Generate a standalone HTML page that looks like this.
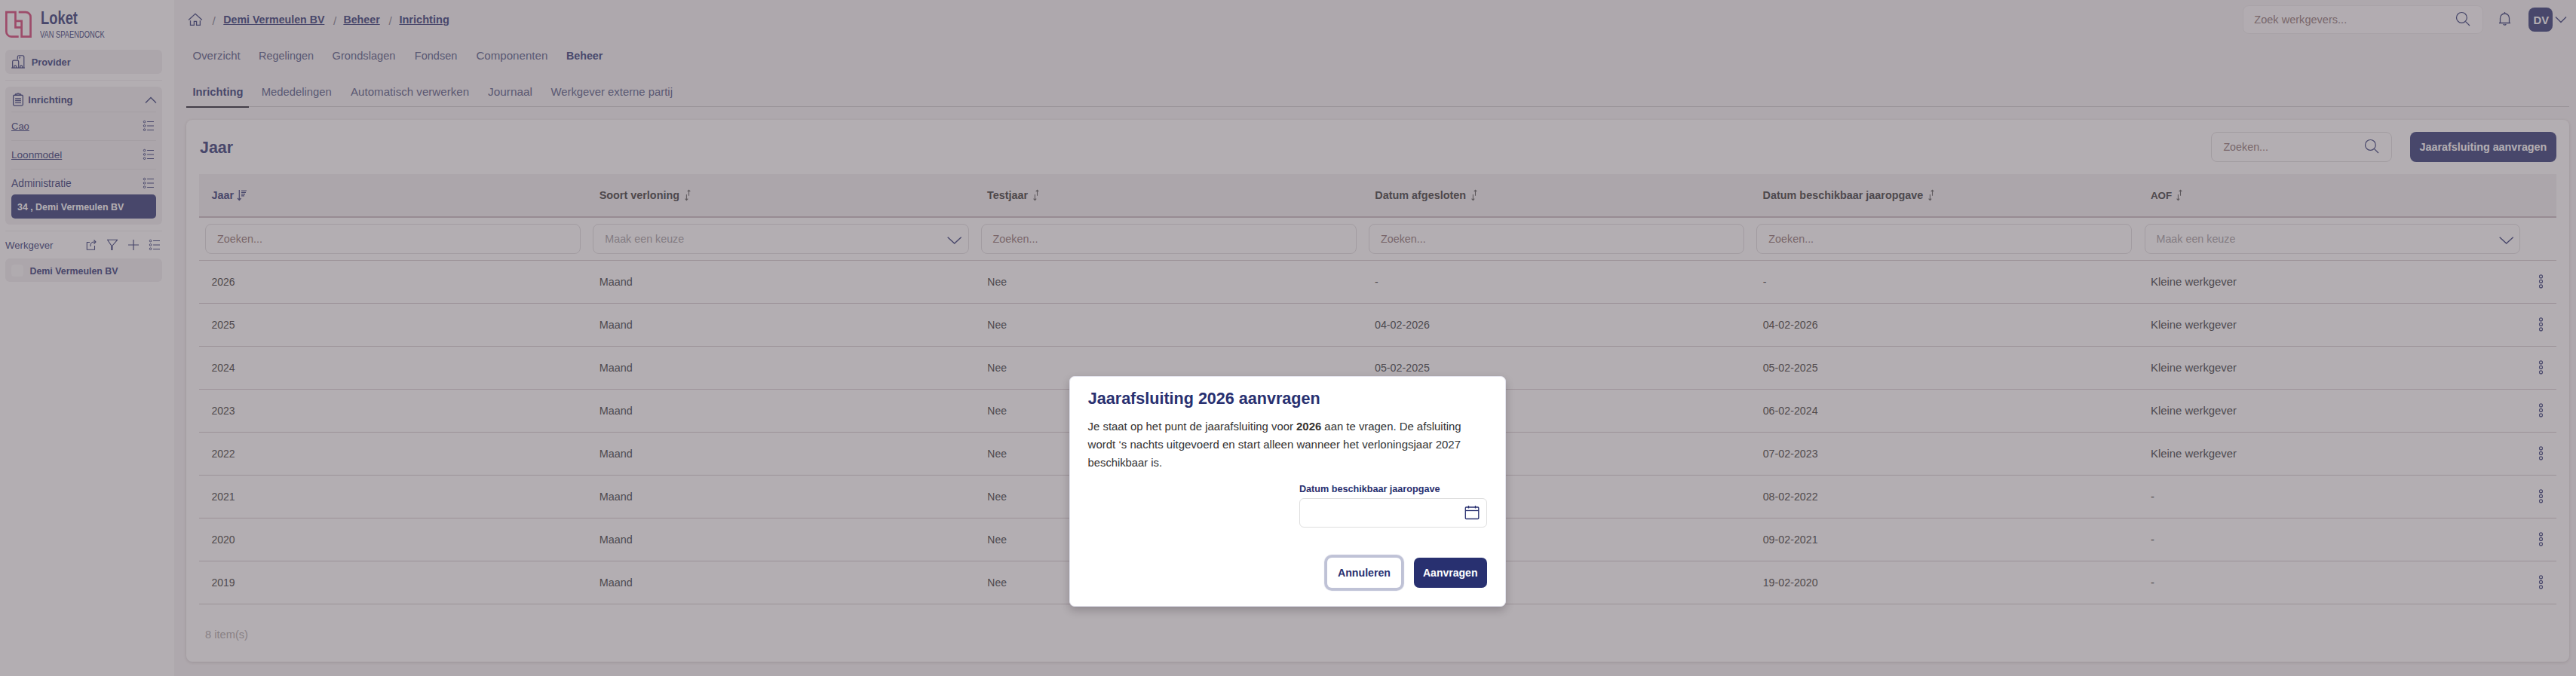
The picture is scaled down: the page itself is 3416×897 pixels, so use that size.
<!DOCTYPE html>
<html><head><meta charset="utf-8"><style>
html,body{margin:0;padding:0;}
body{width:3416px;height:897px;position:relative;overflow:hidden;font-family:"Liberation Sans", sans-serif;background:#f5f3f4;}
.t{position:absolute;white-space:nowrap;line-height:1;}
svg{overflow:visible;}
</style></head><body>
<div style="position:absolute;left:0.0px;top:0.0px;width:231.0px;height:897.0px;background:#ffffff;"></div>
<div style="position:absolute;left:231.0px;top:0.0px;width:3185.0px;height:897.0px;background:#f5f3f4;"></div>
<svg style="position:absolute;left:6.0px;top:13.0px;" width="38" height="39" viewBox="0 0 38 39" fill="none"><g stroke="#d23a6e" stroke-width="2.7" fill="none" stroke-linejoin="miter"><path d="M18.7 35.55 H9 A6.6 6.6 0 0 1 2.35 29 V3.05 H14.45 V23.35 H22.65"/><path d="M18.7 3.05 H28 A6.6 6.6 0 0 1 34.55 9.6 V35.55 H22.65 V14.85 H14.45"/></g></svg>
<div class="t" style="left:53.7px;top:12px;font-size:24.4px;font-weight:bold;color:#283070;transform:scaleX(0.753);transform-origin:0 0;">Loket</div>
<div class="t" style="left:53.2px;top:40px;font-size:12.4px;font-weight:normal;color:#283070;transform:scaleX(0.752);transform-origin:0 0;">VAN SPAENDONCK</div>
<div style="position:absolute;left:7.0px;top:66.0px;width:208.0px;height:32.0px;background:#f0eef0;border-radius:6px;"></div>
<svg style="position:absolute;left:15.0px;top:72.0px;" width="19" height="20" viewBox="0 0 19 20" fill="none"><g stroke="#283070" stroke-width="1.2" fill="none"><path d="M8.3 7 V3.5 A1.75 1.75 0 0 1 10.05 1.75 H15.05 A1.75 1.75 0 0 1 16.8 3.5 V18.05"/><path d="M1.65 18.05 V9.8 A1.75 1.75 0 0 1 3.4 8.05 H7.95 A1.75 1.75 0 0 1 9.7 9.8 V18.05"/><path d="M0.2 18.05 H17.9"/><path d="M3.7 18.05 V16.3 A1.45 1.45 0 0 1 6.6 16.3 V18.05"/><path d="M11.7 18.05 V16.3 A1.45 1.45 0 0 1 14.6 16.3 V18.05"/><path d="M10.3 3.9 H12.2 M10.3 5.1 H11.3"/></g></svg>
<div class="t" style="left:41.7px;top:77px;font-size:12.8px;font-weight:bold;color:#283070;">Provider</div>
<div style="position:absolute;left:7.0px;top:106.0px;width:208.0px;height:1.0px;background:#eeecee;"></div>
<div style="position:absolute;left:7.0px;top:115.0px;width:208.0px;height:183.0px;background:#f0eef0;border-radius:6px;"></div>
<svg style="position:absolute;left:16.0px;top:122.0px;" width="16" height="20" viewBox="0 0 16 20" fill="none"><g stroke="#283070" stroke-width="1.3" fill="none"><rect x="1.65" y="4.25" width="12.7" height="13.8" rx="1.5"/><path d="M4.6 4.25 V2.9 H6.3 A1.9 1.9 0 0 1 9.6 2.9 H11.3 V4.25"/><path d="M4.1 8.8 H11.9 M4.1 11.5 H11.9 M4.1 14.4 H11.9"/></g></svg>
<div class="t" style="left:37.3px;top:126px;font-size:13px;font-weight:bold;color:#283070;">Inrichting</div>
<svg style="position:absolute;left:192.0px;top:128.0px;" width="16" height="9" viewBox="0 0 16 9" fill="none"><path d="M1 8.5 L8 1.5 L15 8.5" stroke="#283070" stroke-width="1.3" fill="none"/></svg>
<div style="position:absolute;left:15.0px;top:148.0px;width:192.0px;height:1.0px;background:#e2e0e2;"></div>
<div style="position:absolute;left:15.0px;top:186.0px;width:192.0px;height:1.0px;background:#e2e0e2;"></div>
<div style="position:absolute;left:15.0px;top:224.0px;width:192.0px;height:1.0px;background:#e2e0e2;"></div>
<div class="t" style="left:15.0px;top:161px;font-size:13px;font-weight:normal;color:#283070;text-decoration:underline;">Cao</div>
<svg style="position:absolute;left:190.0px;top:159.0px;" width="15" height="15" viewBox="0 0 15 15" fill="none"><g stroke="#283070" stroke-width="1" fill="none"><circle cx="1.6" cy="2.6" r="1.3"/><circle cx="1.6" cy="7.9" r="1.3"/><circle cx="1.6" cy="13.2" r="1.3"/><path d="M5.1 2.5 H14 M5.1 8 H14 M5.1 13.5 H14"/></g></svg>
<div class="t" style="left:15.0px;top:199px;font-size:13.6px;font-weight:normal;color:#283070;text-decoration:underline;">Loonmodel</div>
<svg style="position:absolute;left:190.0px;top:197.0px;" width="15" height="15" viewBox="0 0 15 15" fill="none"><g stroke="#283070" stroke-width="1" fill="none"><circle cx="1.6" cy="2.6" r="1.3"/><circle cx="1.6" cy="7.9" r="1.3"/><circle cx="1.6" cy="13.2" r="1.3"/><path d="M5.1 2.5 H14 M5.1 8 H14 M5.1 13.5 H14"/></g></svg>
<div class="t" style="left:15.0px;top:237px;font-size:13.8px;font-weight:normal;color:#283070;">Administratie</div>
<svg style="position:absolute;left:190.0px;top:235.0px;" width="15" height="15" viewBox="0 0 15 15" fill="none"><g stroke="#283070" stroke-width="1" fill="none"><circle cx="1.6" cy="2.6" r="1.3"/><circle cx="1.6" cy="7.9" r="1.3"/><circle cx="1.6" cy="13.2" r="1.3"/><path d="M5.1 2.5 H14 M5.1 8 H14 M5.1 13.5 H14"/></g></svg>
<div style="position:absolute;left:15.0px;top:258.0px;width:192.0px;height:32.0px;background:#283070;border-radius:5px;"></div>
<div class="t" style="left:23.0px;top:269px;font-size:12.4px;font-weight:bold;color:#ffffff;">34 , Demi Vermeulen BV</div>
<div style="position:absolute;left:7.0px;top:306.0px;width:208.0px;height:1.0px;background:#eeecee;"></div>
<div class="t" style="left:7.0px;top:319px;font-size:13.2px;font-weight:normal;color:#283070;">Werkgever</div>
<svg style="position:absolute;left:114.0px;top:317.0px;" width="14" height="15" viewBox="0 0 14 15" fill="none"><g stroke="#283070" stroke-width="1.1" fill="none" stroke-linejoin="round"><path d="M5 4.5 H1.3 V14.2 H11.5 V9"/><path d="M6 10 V8.5 C6 6 8 4 11 4 H12.5"/><path d="M10.5 1.5 L13 4 L10.5 6.5"/></g></svg>
<svg style="position:absolute;left:142.0px;top:317.0px;" width="15" height="15" viewBox="0 0 15 15" fill="none"><path d="M0.5 1.3 H13.6 L7 9 V14.5 L5.8 14.5 V9 Z" stroke="#283070" stroke-width="1.1" fill="none" stroke-linejoin="round"/></svg>
<svg style="position:absolute;left:170.0px;top:318.0px;" width="14" height="14" viewBox="0 0 14 14" fill="none"><path d="M7 0 V14 M0 7 H14" stroke="#283070" stroke-width="1.2"/></svg>
<svg style="position:absolute;left:198.0px;top:317.0px;" width="15" height="15" viewBox="0 0 15 15" fill="none"><g stroke="#283070" stroke-width="1" fill="none"><circle cx="1.6" cy="2.6" r="1.3"/><circle cx="1.6" cy="7.9" r="1.3"/><circle cx="1.6" cy="13.2" r="1.3"/><path d="M5.1 2.5 H14 M5.1 8 H14 M5.1 13.5 H14"/></g></svg>
<div style="position:absolute;left:7.0px;top:343.0px;width:208.0px;height:31.0px;background:#f0eef0;border-radius:6px;"></div>
<div style="position:absolute;left:15.0px;top:351.0px;width:16.0px;height:16.0px;background:#f8f8f8;border-radius:4px;"></div>
<div class="t" style="left:39.5px;top:354px;font-size:12.4px;font-weight:bold;color:#283070;">Demi Vermeulen BV</div>
<svg style="position:absolute;left:249.0px;top:17.0px;" width="20" height="18" viewBox="0 0 20 18" fill="none"><g stroke="#283070" stroke-width="1.3" fill="none" stroke-linejoin="miter"><path d="M1.1 9.6 L10 1.3 L18.9 9.6"/><path d="M3.5 10.3 V16.4 H8.4 V11.3 H11.6 V16.4 H16.4 V10.3"/></g></svg>
<div class="t" style="left:281.4px;top:20px;font-size:15.5px;font-weight:normal;color:#7a7a8a;">/</div>
<div class="t" style="left:296.3px;top:19px;font-size:14.2px;font-weight:bold;color:#283070;text-decoration:underline;">Demi Vermeulen BV</div>
<div class="t" style="left:442.0px;top:20px;font-size:15.5px;font-weight:normal;color:#7a7a8a;">/</div>
<div class="t" style="left:455.4px;top:19px;font-size:14.25px;font-weight:bold;color:#283070;text-decoration:underline;">Beheer</div>
<div class="t" style="left:515.5px;top:20px;font-size:15.5px;font-weight:normal;color:#7a7a8a;">/</div>
<div class="t" style="left:529.4px;top:19px;font-size:14.6px;font-weight:bold;color:#283070;text-decoration:underline;">Inrichting</div>
<div class="t" style="left:255.5px;top:67px;font-size:14.96px;font-weight:normal;color:#4c5280;">Overzicht</div>
<div class="t" style="left:343.0px;top:67px;font-size:14.43px;font-weight:normal;color:#4c5280;">Regelingen</div>
<div class="t" style="left:440.6px;top:67px;font-size:14.67px;font-weight:normal;color:#4c5280;">Grondslagen</div>
<div class="t" style="left:549.8px;top:67px;font-size:14.52px;font-weight:normal;color:#4c5280;">Fondsen</div>
<div class="t" style="left:631.4px;top:66px;font-size:15.12px;font-weight:normal;color:#4c5280;">Componenten</div>
<div class="t" style="left:751.0px;top:67px;font-size:14.25px;font-weight:bold;color:#283070;">Beheer</div>
<div class="t" style="left:255.5px;top:115px;font-size:14.7px;font-weight:bold;color:#283070;">Inrichting</div>
<div class="t" style="left:346.8px;top:115px;font-size:14.8px;font-weight:normal;color:#4c5280;">Mededelingen</div>
<div class="t" style="left:465.0px;top:114px;font-size:15.11px;font-weight:normal;color:#4c5280;">Automatisch verwerken</div>
<div class="t" style="left:647.0px;top:114px;font-size:15.38px;font-weight:normal;color:#4c5280;">Journaal</div>
<div class="t" style="left:730.5px;top:115px;font-size:14.85px;font-weight:normal;color:#4c5280;">Werkgever externe partij</div>
<div style="position:absolute;left:247.0px;top:141.0px;width:3160.0px;height:1.0px;background:#c9c6c9;"></div>
<div style="position:absolute;left:247.0px;top:140.5px;width:83.0px;height:2.0px;background:#1f1f2a;"></div>
<div style="position:absolute;left:2974.0px;top:6.7px;width:318.5px;height:38.5px;background:#fcfbfc;border:1px solid #ebe9eb;border-radius:8px;box-sizing:border-box;"></div>
<div class="t" style="left:2989.3px;top:19px;font-size:14.56px;font-weight:normal;color:#8a6f6f;">Zoek werkgevers...</div>
<svg style="position:absolute;left:3257.0px;top:16.0px;" width="19" height="19" viewBox="0 0 19 19" fill="none"><g stroke="#283070" stroke-width="1.2" fill="none"><circle cx="7.4" cy="7.4" r="6.9"/><path d="M12.6 12.6 L18 18"/></g></svg>
<svg style="position:absolute;left:3313.0px;top:15.0px;" width="17" height="20" viewBox="0 0 17 20" fill="none"><g stroke="#283070" stroke-width="1.3" fill="none"><path d="M8.5 1 V2.5"/><path d="M2.5 15.5 V9 A6 6 0 0 1 14.5 9 V15.5 H1 H16"/><path d="M6.8 17 A1.8 1.8 0 0 0 10.2 17"/></g></svg>
<div style="position:absolute;left:3353.0px;top:10.0px;width:32.0px;height:32.0px;background:#283070;border-radius:8px;"></div>
<div class="t" style="left:3359.6px;top:20px;font-size:14.8px;font-weight:bold;color:#ffffff;">DV</div>
<svg style="position:absolute;left:3388.0px;top:21.0px;" width="16" height="10" viewBox="0 0 16 10" fill="none"><path d="M1 1.5 L8 8.5 L15 1.5" stroke="#283070" stroke-width="1.3" fill="none"/></svg>
<div style="position:absolute;left:247.0px;top:158.7px;width:3160.0px;height:719.7px;background:#ffffff;border-radius:8px;box-shadow:0 1px 4px rgba(40,20,30,0.2);"></div>
<div class="t" style="left:265.0px;top:186px;font-size:21.4px;font-weight:bold;color:#283070;">Jaar</div>
<div style="position:absolute;left:2932.0px;top:175.0px;width:239.5px;height:39.6px;background:#fff;border:1px solid #dcdadc;border-radius:8px;box-sizing:border-box;"></div>
<div class="t" style="left:2948.4px;top:188px;font-size:14.3px;font-weight:normal;color:#8a6f6f;">Zoeken...</div>
<svg style="position:absolute;left:3136.0px;top:185.0px;" width="19" height="19" viewBox="0 0 19 19" fill="none"><g stroke="#283070" stroke-width="1.2" fill="none"><circle cx="7.4" cy="7.4" r="6.9"/><path d="M12.6 12.6 L18 18"/></g></svg>
<div style="position:absolute;left:3196.0px;top:175.0px;width:194.0px;height:40.0px;background:#283070;border-radius:8px;"></div>
<div class="t" style="left:3208.5px;top:188px;font-size:14.34px;font-weight:bold;color:#ffffff;">Jaarafsluiting aanvragen</div>
<div style="position:absolute;left:264.0px;top:231.0px;width:3126.0px;height:56.0px;background:#f0eef0;"></div>
<div style="position:absolute;left:264.0px;top:287.0px;width:3126.0px;height:2.0px;background:#c6b9c0;"></div>
<div class="t" style="left:280.4px;top:252px;font-size:14.4px;font-weight:bold;color:#283070;">Jaar</div>
<div class="t" style="left:794.7px;top:252px;font-size:14.4px;font-weight:bold;color:#333333;">Soort verloning</div>
<div class="t" style="left:1309.0px;top:252px;font-size:14.4px;font-weight:bold;color:#333333;">Testjaar</div>
<div class="t" style="left:1823.3px;top:252px;font-size:14.4px;font-weight:bold;color:#333333;">Datum afgesloten</div>
<div class="t" style="left:2337.6px;top:252px;font-size:14.4px;font-weight:bold;color:#333333;">Datum beschikbaar jaaropgave</div>
<div class="t" style="left:2851.9px;top:253px;font-size:13.4px;font-weight:bold;color:#333333;">AOF</div>
<svg style="position:absolute;left:315.0px;top:251.0px;" width="13" height="16" viewBox="0 0 13 16" fill="none"><g stroke="#283070" stroke-width="1.2" fill="none"><path d="M2.3 1 V14.5 M0 12 L2.3 14.5 L4.6 12"/><path d="M5 2 H12 M5 4.3 H11 M5 6.6 H10 M5 8.9 H9"/></g></svg>
<svg style="position:absolute;left:907.6px;top:251.0px;" width="9" height="16" viewBox="0 0 9 16" fill="none"><g stroke="#555" stroke-width="1.05" fill="none"><path d="M2.4 7 V14.6 M0.6 12.6 L2.4 14.6 L4.2 12.6"/><path d="M5.5 8.8 V1.2 M3.7 3.2 L5.5 1.2 L7.3 3.2"/></g></svg>
<svg style="position:absolute;left:1369.6px;top:251.0px;" width="9" height="16" viewBox="0 0 9 16" fill="none"><g stroke="#555" stroke-width="1.05" fill="none"><path d="M2.4 7 V14.6 M0.6 12.6 L2.4 14.6 L4.2 12.6"/><path d="M5.5 8.8 V1.2 M3.7 3.2 L5.5 1.2 L7.3 3.2"/></g></svg>
<svg style="position:absolute;left:1951.3px;top:251.0px;" width="9" height="16" viewBox="0 0 9 16" fill="none"><g stroke="#555" stroke-width="1.05" fill="none"><path d="M2.4 7 V14.6 M0.6 12.6 L2.4 14.6 L4.2 12.6"/><path d="M5.5 8.8 V1.2 M3.7 3.2 L5.5 1.2 L7.3 3.2"/></g></svg>
<svg style="position:absolute;left:2557.4px;top:251.0px;" width="9" height="16" viewBox="0 0 9 16" fill="none"><g stroke="#555" stroke-width="1.05" fill="none"><path d="M2.4 7 V14.6 M0.6 12.6 L2.4 14.6 L4.2 12.6"/><path d="M5.5 8.8 V1.2 M3.7 3.2 L5.5 1.2 L7.3 3.2"/></g></svg>
<svg style="position:absolute;left:2885.6px;top:251.0px;" width="9" height="16" viewBox="0 0 9 16" fill="none"><g stroke="#555" stroke-width="1.05" fill="none"><path d="M2.4 7 V14.6 M0.6 12.6 L2.4 14.6 L4.2 12.6"/><path d="M5.5 8.8 V1.2 M3.7 3.2 L5.5 1.2 L7.3 3.2"/></g></svg>
<div style="position:absolute;left:272.0px;top:297.0px;width:498.3px;height:39.6px;background:#fff;border:1px solid #dcdadc;border-radius:8px;box-sizing:border-box;"></div>
<div class="t" style="left:288.0px;top:310px;font-size:14.39px;font-weight:normal;color:#8a6f6f;">Zoeken...</div>
<div style="position:absolute;left:786.3px;top:297.0px;width:498.3px;height:39.6px;background:#fff;border:1px solid #dcdadc;border-radius:8px;box-sizing:border-box;"></div>
<div class="t" style="left:802.3px;top:310px;font-size:14.31px;font-weight:normal;color:#a09a9e;">Maak een keuze</div>
<svg style="position:absolute;left:1256.3px;top:313.5px;" width="20" height="11" viewBox="0 0 20 11" fill="none"><path d="M0.7 0.7 L9.7 9 L18.7 0.7" stroke="#283070" stroke-width="1.4" fill="none"/></svg>
<div style="position:absolute;left:1300.6px;top:297.0px;width:498.3px;height:39.6px;background:#fff;border:1px solid #dcdadc;border-radius:8px;box-sizing:border-box;"></div>
<div class="t" style="left:1316.6px;top:310px;font-size:14.39px;font-weight:normal;color:#8a6f6f;">Zoeken...</div>
<div style="position:absolute;left:1814.9px;top:297.0px;width:498.3px;height:39.6px;background:#fff;border:1px solid #dcdadc;border-radius:8px;box-sizing:border-box;"></div>
<div class="t" style="left:1830.9px;top:310px;font-size:14.39px;font-weight:normal;color:#8a6f6f;">Zoeken...</div>
<div style="position:absolute;left:2329.2px;top:297.0px;width:498.3px;height:39.6px;background:#fff;border:1px solid #dcdadc;border-radius:8px;box-sizing:border-box;"></div>
<div class="t" style="left:2345.2px;top:310px;font-size:14.39px;font-weight:normal;color:#8a6f6f;">Zoeken...</div>
<div style="position:absolute;left:2843.5px;top:297.0px;width:498.3px;height:39.6px;background:#fff;border:1px solid #dcdadc;border-radius:8px;box-sizing:border-box;"></div>
<div class="t" style="left:2859.5px;top:310px;font-size:14.31px;font-weight:normal;color:#a09a9e;">Maak een keuze</div>
<svg style="position:absolute;left:3313.5px;top:313.5px;" width="20" height="11" viewBox="0 0 20 11" fill="none"><path d="M0.7 0.7 L9.7 9 L18.7 0.7" stroke="#283070" stroke-width="1.4" fill="none"/></svg>
<div style="position:absolute;left:264.0px;top:345.0px;width:3126.0px;height:1.0px;background:#d0c6cb;"></div>
<div class="t" style="left:280.4px;top:367px;font-size:14.0px;font-weight:normal;color:#333333;">2026</div>
<div class="t" style="left:794.8px;top:367px;font-size:14.39px;font-weight:normal;color:#333333;">Maand</div>
<div class="t" style="left:1309.3px;top:367px;font-size:14.0px;font-weight:normal;color:#333333;">Nee</div>
<div class="t" style="left:1823.0px;top:367px;font-size:14.27px;font-weight:normal;color:#333333;">-</div>
<div class="t" style="left:2337.7px;top:367px;font-size:14.27px;font-weight:normal;color:#333333;">-</div>
<div class="t" style="left:2852.0px;top:367px;font-size:14.86px;font-weight:normal;color:#333333;">Kleine werkgever</div>
<svg style="position:absolute;left:3366.0px;top:363.5px;" width="7" height="20" viewBox="0 0 7 20" fill="none"><g stroke="#283070" stroke-width="1.1" fill="none"><circle cx="3.5" cy="2.9" r="2.0"/><circle cx="3.5" cy="9.4" r="2.0"/><circle cx="3.5" cy="15.9" r="2.0"/></g></svg>
<div style="position:absolute;left:264.0px;top:402.0px;width:3126.0px;height:1.0px;background:#d0c6cb;"></div>
<div class="t" style="left:280.4px;top:424px;font-size:14.0px;font-weight:normal;color:#333333;">2025</div>
<div class="t" style="left:794.8px;top:424px;font-size:14.39px;font-weight:normal;color:#333333;">Maand</div>
<div class="t" style="left:1309.3px;top:424px;font-size:14.0px;font-weight:normal;color:#333333;">Nee</div>
<div class="t" style="left:1823.0px;top:424px;font-size:14.27px;font-weight:normal;color:#333333;">04-02-2026</div>
<div class="t" style="left:2337.7px;top:424px;font-size:14.27px;font-weight:normal;color:#333333;">04-02-2026</div>
<div class="t" style="left:2852.0px;top:424px;font-size:14.86px;font-weight:normal;color:#333333;">Kleine werkgever</div>
<svg style="position:absolute;left:3366.0px;top:420.5px;" width="7" height="20" viewBox="0 0 7 20" fill="none"><g stroke="#283070" stroke-width="1.1" fill="none"><circle cx="3.5" cy="2.9" r="2.0"/><circle cx="3.5" cy="9.4" r="2.0"/><circle cx="3.5" cy="15.9" r="2.0"/></g></svg>
<div style="position:absolute;left:264.0px;top:459.0px;width:3126.0px;height:1.0px;background:#d0c6cb;"></div>
<div class="t" style="left:280.4px;top:481px;font-size:14.0px;font-weight:normal;color:#333333;">2024</div>
<div class="t" style="left:794.8px;top:481px;font-size:14.39px;font-weight:normal;color:#333333;">Maand</div>
<div class="t" style="left:1309.3px;top:481px;font-size:14.0px;font-weight:normal;color:#333333;">Nee</div>
<div class="t" style="left:1823.0px;top:481px;font-size:14.27px;font-weight:normal;color:#333333;">05-02-2025</div>
<div class="t" style="left:2337.7px;top:481px;font-size:14.27px;font-weight:normal;color:#333333;">05-02-2025</div>
<div class="t" style="left:2852.0px;top:481px;font-size:14.86px;font-weight:normal;color:#333333;">Kleine werkgever</div>
<svg style="position:absolute;left:3366.0px;top:477.5px;" width="7" height="20" viewBox="0 0 7 20" fill="none"><g stroke="#283070" stroke-width="1.1" fill="none"><circle cx="3.5" cy="2.9" r="2.0"/><circle cx="3.5" cy="9.4" r="2.0"/><circle cx="3.5" cy="15.9" r="2.0"/></g></svg>
<div style="position:absolute;left:264.0px;top:516.0px;width:3126.0px;height:1.0px;background:#d0c6cb;"></div>
<div class="t" style="left:280.4px;top:538px;font-size:14.0px;font-weight:normal;color:#333333;">2023</div>
<div class="t" style="left:794.8px;top:538px;font-size:14.39px;font-weight:normal;color:#333333;">Maand</div>
<div class="t" style="left:1309.3px;top:538px;font-size:14.0px;font-weight:normal;color:#333333;">Nee</div>
<div class="t" style="left:1823.0px;top:538px;font-size:14.27px;font-weight:normal;color:#333333;">06-02-2024</div>
<div class="t" style="left:2337.7px;top:538px;font-size:14.27px;font-weight:normal;color:#333333;">06-02-2024</div>
<div class="t" style="left:2852.0px;top:538px;font-size:14.86px;font-weight:normal;color:#333333;">Kleine werkgever</div>
<svg style="position:absolute;left:3366.0px;top:534.5px;" width="7" height="20" viewBox="0 0 7 20" fill="none"><g stroke="#283070" stroke-width="1.1" fill="none"><circle cx="3.5" cy="2.9" r="2.0"/><circle cx="3.5" cy="9.4" r="2.0"/><circle cx="3.5" cy="15.9" r="2.0"/></g></svg>
<div style="position:absolute;left:264.0px;top:573.0px;width:3126.0px;height:1.0px;background:#d0c6cb;"></div>
<div class="t" style="left:280.4px;top:595px;font-size:14.0px;font-weight:normal;color:#333333;">2022</div>
<div class="t" style="left:794.8px;top:595px;font-size:14.39px;font-weight:normal;color:#333333;">Maand</div>
<div class="t" style="left:1309.3px;top:595px;font-size:14.0px;font-weight:normal;color:#333333;">Nee</div>
<div class="t" style="left:1823.0px;top:595px;font-size:14.27px;font-weight:normal;color:#333333;">07-02-2023</div>
<div class="t" style="left:2337.7px;top:595px;font-size:14.27px;font-weight:normal;color:#333333;">07-02-2023</div>
<div class="t" style="left:2852.0px;top:595px;font-size:14.86px;font-weight:normal;color:#333333;">Kleine werkgever</div>
<svg style="position:absolute;left:3366.0px;top:591.5px;" width="7" height="20" viewBox="0 0 7 20" fill="none"><g stroke="#283070" stroke-width="1.1" fill="none"><circle cx="3.5" cy="2.9" r="2.0"/><circle cx="3.5" cy="9.4" r="2.0"/><circle cx="3.5" cy="15.9" r="2.0"/></g></svg>
<div style="position:absolute;left:264.0px;top:630.0px;width:3126.0px;height:1.0px;background:#d0c6cb;"></div>
<div class="t" style="left:280.4px;top:652px;font-size:14.0px;font-weight:normal;color:#333333;">2021</div>
<div class="t" style="left:794.8px;top:652px;font-size:14.39px;font-weight:normal;color:#333333;">Maand</div>
<div class="t" style="left:1309.3px;top:652px;font-size:14.0px;font-weight:normal;color:#333333;">Nee</div>
<div class="t" style="left:1823.0px;top:652px;font-size:14.27px;font-weight:normal;color:#333333;">08-02-2022</div>
<div class="t" style="left:2337.7px;top:652px;font-size:14.27px;font-weight:normal;color:#333333;">08-02-2022</div>
<div class="t" style="left:2852.0px;top:652px;font-size:14.86px;font-weight:normal;color:#333333;">-</div>
<svg style="position:absolute;left:3366.0px;top:648.5px;" width="7" height="20" viewBox="0 0 7 20" fill="none"><g stroke="#283070" stroke-width="1.1" fill="none"><circle cx="3.5" cy="2.9" r="2.0"/><circle cx="3.5" cy="9.4" r="2.0"/><circle cx="3.5" cy="15.9" r="2.0"/></g></svg>
<div style="position:absolute;left:264.0px;top:687.0px;width:3126.0px;height:1.0px;background:#d0c6cb;"></div>
<div class="t" style="left:280.4px;top:709px;font-size:14.0px;font-weight:normal;color:#333333;">2020</div>
<div class="t" style="left:794.8px;top:709px;font-size:14.39px;font-weight:normal;color:#333333;">Maand</div>
<div class="t" style="left:1309.3px;top:709px;font-size:14.0px;font-weight:normal;color:#333333;">Nee</div>
<div class="t" style="left:1823.0px;top:709px;font-size:14.27px;font-weight:normal;color:#333333;">09-02-2021</div>
<div class="t" style="left:2337.7px;top:709px;font-size:14.27px;font-weight:normal;color:#333333;">09-02-2021</div>
<div class="t" style="left:2852.0px;top:709px;font-size:14.86px;font-weight:normal;color:#333333;">-</div>
<svg style="position:absolute;left:3366.0px;top:705.5px;" width="7" height="20" viewBox="0 0 7 20" fill="none"><g stroke="#283070" stroke-width="1.1" fill="none"><circle cx="3.5" cy="2.9" r="2.0"/><circle cx="3.5" cy="9.4" r="2.0"/><circle cx="3.5" cy="15.9" r="2.0"/></g></svg>
<div style="position:absolute;left:264.0px;top:744.0px;width:3126.0px;height:1.0px;background:#d0c6cb;"></div>
<div class="t" style="left:280.4px;top:766px;font-size:14.0px;font-weight:normal;color:#333333;">2019</div>
<div class="t" style="left:794.8px;top:766px;font-size:14.39px;font-weight:normal;color:#333333;">Maand</div>
<div class="t" style="left:1309.3px;top:766px;font-size:14.0px;font-weight:normal;color:#333333;">Nee</div>
<div class="t" style="left:1823.0px;top:766px;font-size:14.27px;font-weight:normal;color:#333333;">19-02-2020</div>
<div class="t" style="left:2337.7px;top:766px;font-size:14.27px;font-weight:normal;color:#333333;">19-02-2020</div>
<div class="t" style="left:2852.0px;top:766px;font-size:14.86px;font-weight:normal;color:#333333;">-</div>
<svg style="position:absolute;left:3366.0px;top:762.5px;" width="7" height="20" viewBox="0 0 7 20" fill="none"><g stroke="#283070" stroke-width="1.1" fill="none"><circle cx="3.5" cy="2.9" r="2.0"/><circle cx="3.5" cy="9.4" r="2.0"/><circle cx="3.5" cy="15.9" r="2.0"/></g></svg>
<div style="position:absolute;left:264.0px;top:801.0px;width:3126.0px;height:1.0px;background:#d0c6cb;"></div>
<div class="t" style="left:272.0px;top:835px;font-size:14.66px;font-weight:normal;color:#a8a4a6;">8 item(s)</div>
<div style="position:absolute;left:0;top:0;width:3416px;height:897px;background:rgba(104,93,101,0.5);"></div>
<div style="position:absolute;left:1417.5px;top:499.0px;width:579.3px;height:305.6px;background:#fff;border:1px solid #e4e4ee;box-sizing:border-box;border-radius:7px;box-shadow:0 5px 12px rgba(20,10,20,0.22);"></div>
<div class="t" style="left:1442.8px;top:518px;font-size:21.56px;font-weight:bold;color:#283070;">Jaarafsluiting 2026 aanvragen</div>
<div class="t" style="left:1442.6px;top:559px;font-size:14.9px;font-weight:normal;color:#333333;">Je staat op het punt de jaarafsluiting voor <b>2026</b> aan te vragen. De afsluiting</div>
<div class="t" style="left:1442.6px;top:582px;font-size:15.0px;font-weight:normal;color:#333333;">wordt ‘s nachts uitgevoerd en start alleen wanneer het verloningsjaar 2027</div>
<div class="t" style="left:1442.6px;top:607px;font-size:14.75px;font-weight:normal;color:#333333;">beschikbaar is.</div>
<div class="t" style="left:1723.0px;top:643px;font-size:12.62px;font-weight:bold;color:#283070;">Datum beschikbaar jaaropgave</div>
<div style="position:absolute;left:1723.0px;top:660.5px;width:248.5px;height:39.1px;background:#fff;border:1px solid #dedede;border-radius:6px;box-sizing:border-box;"></div>
<svg style="position:absolute;left:1942.0px;top:670.0px;" width="20" height="20" viewBox="0 0 20 20" fill="none"><g stroke="#283070" stroke-width="1.3" fill="none"><rect x="1.3" y="3" width="17.5" height="15.5" rx="1"/><path d="M1.3 7.5 H18.8"/><path d="M5.5 1 V4.5 M14.5 1 V4.5"/></g></svg>
<div style="position:absolute;left:1760.0px;top:740.0px;width:98.0px;height:39.5px;background:#fff;border-radius:6px;box-shadow:0 0 1px 4px #bfc2d6;"></div>
<div class="t" style="left:1774.0px;top:753px;font-size:14.16px;font-weight:bold;color:#283070;">Annuleren</div>
<div style="position:absolute;left:1875.0px;top:740.0px;width:96.8px;height:39.6px;background:#283070;border-radius:7px;"></div>
<div class="t" style="left:1887.0px;top:753px;font-size:14.03px;font-weight:bold;color:#ffffff;">Aanvragen</div>
</body></html>
